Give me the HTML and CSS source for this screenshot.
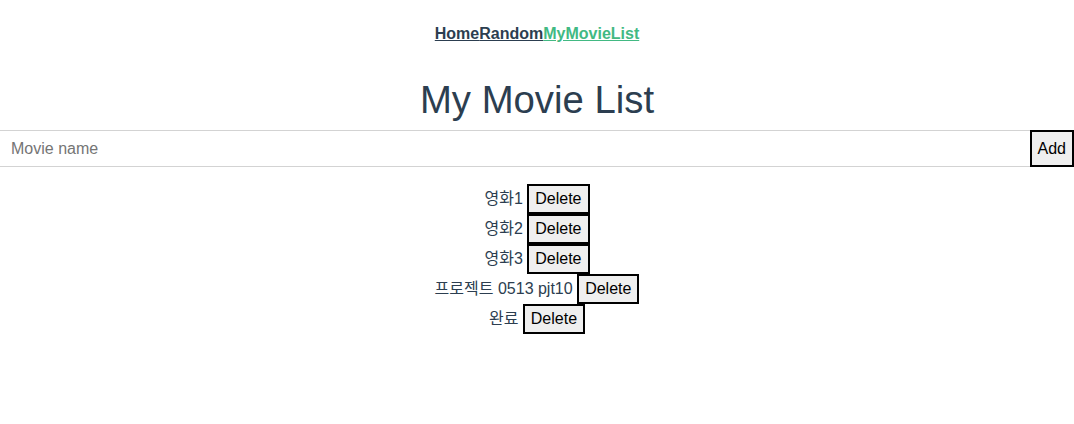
FILE: index.html
```html
<!DOCTYPE html>
<html>
<head>
<meta charset="utf-8">
<link rel="stylesheet" href="styles.css">
</head>
<body>
<div class="app">
  <nav class="nav">
    <a href="#" class="nav-link">Home</a><a href="#" class="nav-link">Random</a><a href="#" class="nav-link active">MyMovieList</a>
  </nav>
  <h1 class="title">My Movie List</h1>
  <div class="form-row">
    <input class="movie-input" type="text" placeholder="Movie name">
    <button class="btn">Add</button>
  </div>
  <ul class="movie-list">
    <li class="movie-item">영화1 <button class="btn">Delete</button></li>
    <li class="movie-item">영화2 <button class="btn">Delete</button></li>
    <li class="movie-item">영화3 <button class="btn">Delete</button></li>
    <li class="movie-item">프로젝트 0513 pjt10 <button class="btn">Delete</button></li>
    <li class="movie-item">완료 <button class="btn">Delete</button></li>
  </ul>
</div>
</body>
</html>
```

FILE: styles.css
```css
html, body {
  margin: 0;
  padding: 0;
  background: #ffffff;
}
.app {
  font-family: "Liberation Sans", Arial, "Noto Sans CJK KR", sans-serif;
  color: #2c3e50;
  text-align: center;
  font-size: 16px;
}
.nav {
  padding: 25px 0 0;
  height: 18px;
  line-height: 18px;
}
.nav-link {
  font-weight: bold;
  color: #2c3e50;
  text-decoration: underline;
}
.nav-link.active {
  color: #42b983;
}
.title {
  font-size: 38.3px;
  font-weight: normal;
  line-height: 44px;
  margin: 35px 0 8px;
}
.form-row {
  display: flex;
  height: 37px;
}
.movie-input {
  flex: 1;
  min-width: 0;
  box-sizing: border-box;
  height: 37px;
  margin: 0;
  border: 1px solid #d3d3d3;
  border-left: none;
  border-right: none;
  padding: 0 11px;
  font-family: "Liberation Sans", Arial, sans-serif;
  font-size: 16px;
  color: #2c3e50;
  outline: none;
}
.movie-input::placeholder {
  color: #757575;
}
.btn {
  box-sizing: border-box;
  margin: 0;
  border: 2px solid #000000;
  background: #efefef;
  color: #000000;
  font-family: "Liberation Sans", Arial, sans-serif;
  font-size: 16px;
  line-height: 18px;
  padding: 4px 6px;
  height: 30px;
  cursor: pointer;
}
.form-row .btn {
  height: 37px;
}
.movie-list {
  list-style: none;
  margin: 17px 0 0;
  padding: 0;
}
.movie-item {
  height: 30px;
  line-height: 30px;
}
.movie-item .btn {
  vertical-align: top;
}
```
